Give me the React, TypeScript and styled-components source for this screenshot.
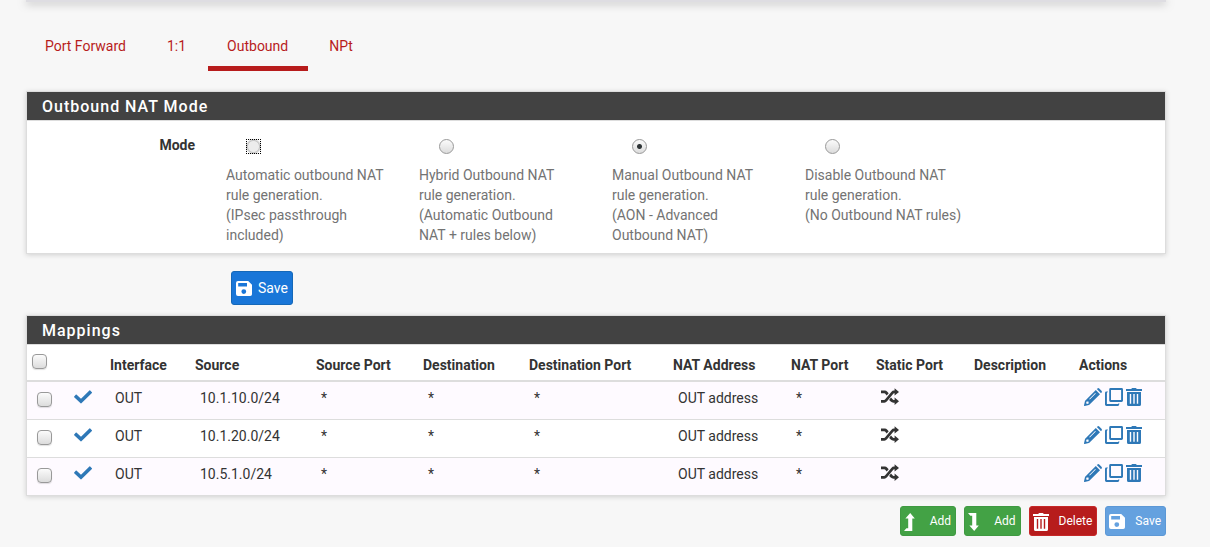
import React from 'react';
import styled, { createGlobalStyle, css } from 'styled-components';

const GlobalStyle = createGlobalStyle`
  *, *::before, *::after { box-sizing: border-box; }
  html { min-height: 100%; background: #f7f7f7; }
  body {
    margin: 0;
    background: #f7f7f7;
    color: #333;
    font: 14px/20px Roboto, "Liberation Sans", sans-serif;
  }
`;

const Page = styled.main`
  padding: 0 44px 10px 26px;
`;

const TopBar = styled.div`
  height: 2px;
  background: #dedde2;
  box-shadow: 0 1px 8px rgba(0, 0, 0, 0.5);
`;

const Tabs = styled.nav`
  display: flex;
  gap: 2px;
  margin: 24px 0 20px;
`;

const Tab = styled.a<{ $active?: boolean }>`
  padding: 10px 20px 10px 19px;
  border-bottom: 5px solid ${(p) => (p.$active ? '#b71c1c' : 'transparent')};
  color: #b71c1c;
  text-decoration: none;
`;

const Panel = styled.section`
  background: #fff;
  border: 1px solid #ddd;
  box-shadow: 0 1px 5px rgba(0, 0, 0, 0.16);
`;

const PanelTitle = styled.h2`
  margin: 0;
  height: 29px;
  padding: 0 15px;
  background: #424242;
  border-bottom: 1px solid #ddd;
  color: #fff;
  font-size: 16px;
  font-weight: 500;
  line-height: 30px;
  letter-spacing: 1px;
`;

const ModeRow = styled.fieldset`
  display: flex;
  margin: 0;
  border: 0;
  padding: 14px 0 8px;
`;

const ModeLabel = styled.span`
  width: 168px;
  margin-right: 31px;
  text-align: right;
  font-weight: 700;
`;

const ModeOptions = styled.div`
  display: flex;
`;

const ModeOption = styled.label`
  width: 193px;
  padding-right: 33px;
  color: #737373;
`;

const OptionText = styled.span`
  display: block;
  margin-top: 11px;
`;

const control = css`
  appearance: none;
  display: block;
  width: 15px;
  height: 15px;
  margin: 0;
  border: 1px solid #999;
  background: linear-gradient(#fbfbfb, #dcdcdc);
`;

const Radio = styled.input`
  ${control}
  margin: 4px 0 0 20px;
  border-radius: 50%;
  &:checked {
    background: radial-gradient(circle, #2e3436 0 2px, transparent 3px), linear-gradient(#fbfbfb, #dcdcdc);
  }
  &:focus {
    border: 1px dotted #000;
    border-radius: 0;
    outline: none;
    background: radial-gradient(circle, #ececec 0 5px, #c4c4c4 6px, #fff 8px);
  }
`;

const Checkbox = styled.input`
  ${control}
  border-radius: 4px;
  box-shadow: 0 1px 1px rgba(0, 0, 0, 0.12);
  &:checked { background: #2e78b7; }
`;

const SaveRow = styled.div`
  padding: 17px 0 10px 205px;
`;

const Button = styled.button<{ $color: string; $edge: string; $small?: boolean }>`
  display: flex;
  align-items: center;
  justify-content: space-between;
  gap: ${(p) => (p.$small ? 8 : 4)}px;
  height: ${(p) => (p.$small ? 30 : 34)}px;
  padding: ${(p) => (p.$small ? '0 4px 0 3px' : '0 4px')};
  border: 1px solid ${(p) => p.$edge};
  border-radius: 3px;
  background: ${(p) => p.$color};
  color: #fff;
  font-family: inherit;
  font-size: ${(p) => (p.$small ? 12 : 14)}px;
  line-height: 20px;
`;

const Footer = styled.div`
  display: flex;
  justify-content: flex-end;
  gap: 8px;
  margin-top: 10px;
`;

const MappingTable = styled.table`
  width: 100%;
  table-layout: fixed;
  border-collapse: separate;
  border-spacing: 0;
`;

const HeadCell = styled.th`
  height: 37px;
  padding: 10px 0 5px 5px;
  border-bottom: 2px solid #ddd;
  text-align: left;
  vertical-align: top;
  font-weight: 700;
  white-space: nowrap;
`;

const CheckHeadCell = styled(HeadCell)`
  padding-top: 9px;
`;

const Cell = styled.td`
  height: 38px;
  padding: 6px 0 0 10px;
  border-bottom: 1px solid #ddd;
  vertical-align: top;
  white-space: nowrap;
`;

const CheckCell = styled(Cell)`
  padding-top: 10px;
`;

const Row = styled.tr`
  &:nth-child(odd) { background: #fefaff; }
  &:last-child > td { height: 37px; border-bottom: 0; }
`;

const ActionList = styled.div`
  display: flex;
  gap: 3px;
  color: #2e78b7;
`;

const IconButton = styled.button`
  display: block;
  padding: 0;
  border: 0;
  background: none;
  color: inherit;
  line-height: 0;
`;

const Svg = styled.svg<{ $color?: string }>`
  display: block;
  flex: none;
  width: 18px;
  height: 18px;
  fill: ${(p) => p.$color ?? 'currentColor'};
  ${Button} & { margin-top: 1px; }
`;

const icons = {
  check: 'M2.4 6.5 7 10.8 15.4 2.5Q15.8 2.1 16.2 2.5L17.9 4.2Q18.2 4.6 17.9 5L7.4 15.3Q7 15.6 6.6 15.3L.2 9.2Q-.2 8.8 .2 8.4L1.7 6.7Q2 6.2 2.4 6.5Z',
  pencil:
    'M12.8 1 13.5.4Q14.4-.3 15.2.5L17.5 2.8Q18.3 3.6 17.6 4.5L17 5.2ZM11.8 2 16 6.2 5.6 16.6Q5.3 16.9 4.9 17L.7 18Q-.1 18.1 0 17.3L1 13.1Q1.1 12.7 1.4 12.4ZM2.6 13.4 2.1 15.1 2.9 15.9 4.7 15.4 4.5 13.6ZM11.2 5 5.2 11 5.8 11.6 11.8 5.6Z',
  clone:
    'M5.6 0H16.6Q18 0 18 1.4V12.6Q18 14 16.6 14H5.6Q4.2 14 4.2 12.6V1.4Q4.2 0 5.6 0ZM6 1.9V12.1H16.1V1.9ZM1.4 3.6H3V2.9 3.6L1.9 5V16.1H13L14.2 15V16.6Q14.2 18 12.8 18H1.4Q0 18 0 16.6V5Q0 3.6 1.4 3.6Z',
  trash:
    'M5.4 1Q5.4 0 6.4 0H9.6Q10.6 0 10.6 1H16V3H0V1ZM1 4H15V16.4Q15 18 13.4 18H2.6Q1 18 1 16.4ZM3.8 6V15.8H5.2V6ZM7.3 6V15.8H8.7V6ZM10.8 6V15.8H12.2V6Z',
  shuffle:
    'M0 2.5H3.9Q5.2 2.5 6.3 3.7L7.7 5.2 5.7 7.4 4 5.6Q3.7 5.3 3.2 5.3H0ZM0 11.9H3.2Q3.7 11.9 4 11.5L10.3 3.9Q11.5 2.5 13 2.5H13.6V.3L18 4 13.6 7.6V5.3H13Q12.6 5.3 12.3 5.7L6 13.3Q4.9 14.7 3.4 14.7H0ZM8.1 12 10 9.6 11.8 11.5Q12.1 11.9 12.6 11.9H13.6V9.6L18 13.2 13.6 16.9V14.7H12.5Q10.8 14.7 9.7 13.6Z',
  save:
    'M2 1H12.2L16 4.8V14.2Q16 16 14.2 16H2Q0 16 0 14V3Q0 1 2 1ZM2.2 3V6.6H11V3ZM7.8 9.2A2.4 2.4 0 1 0 7.8 14 2.4 2.4 0 1 0 7.8 9.2Z',
  up: 'M6.2 0 10.8 5.4H8.3V18H0L2.4 15.2H4.2V5.4H1.4Z',
  down: 'M6.2 18 10.8 12.6H8.3V0H0L2.4 2.8H4.2V12.6H1.4Z',
};

function Icon({ name, color }: { name: keyof typeof icons; color?: string }) {
  return (
    <Svg viewBox="0 0 18 18" $color={color} aria-hidden="true">
      <path fillRule="evenodd" d={icons[name]} />
    </Svg>
  );
}

const tabs = ['Port Forward', '1:1', 'Outbound', 'NPt'];

const modes = [
  ['Automatic outbound NAT rule generation.', '(IPsec passthrough included)'],
  ['Hybrid Outbound NAT rule generation.', '(Automatic Outbound NAT + rules below)'],
  ['Manual Outbound NAT rule generation.', '(AON - Advanced Outbound NAT)'],
  ['Disable Outbound NAT rule generation.', '(No Outbound NAT rules)'],
];

const Col = styled.col<{ $w: number }>`
  width: ${(p) => p.$w}px;
`;

const widths = [37, 41, 85, 121, 107, 106, 144, 118, 85, 98, 105, 91];
const headings = [
  'Interface', 'Source', 'Source Port', 'Destination', 'Destination Port',
  'NAT Address', 'NAT Port', 'Static Port', 'Description', 'Actions',
];
const sources = ['10.1.10.0/24', '10.1.20.0/24', '10.5.1.0/24'];

export default function App() {
  return (
    <>
      <GlobalStyle />
      <Page>
        <TopBar />
        <Tabs>
          {tabs.map((t) => (
            <Tab key={t} href="#" $active={t === 'Outbound'}>{t}</Tab>
          ))}
        </Tabs>

        <Panel>
          <PanelTitle>Outbound NAT Mode</PanelTitle>
          <ModeRow aria-labelledby="mode">
            <ModeLabel id="mode">Mode</ModeLabel>
            <ModeOptions>
              {modes.map(([text, note], i) => (
                <ModeOption key={text}>
                  <Radio type="radio" name="mode" defaultChecked={i === 2} autoFocus={i === 0} />
                  <OptionText>{text}<br />{note}</OptionText>
                </ModeOption>
              ))}
            </ModeOptions>
          </ModeRow>
        </Panel>

        <SaveRow>
          <Button $color="#1976d8" $edge="#1568b8"><Icon name="save" />Save</Button>
        </SaveRow>

        <Panel>
          <PanelTitle>Mappings</PanelTitle>
          <MappingTable>
            <colgroup>{widths.map((w, i) => <Col key={i} $w={w} />)}</colgroup>
            <thead>
              <tr>
                <CheckHeadCell><Checkbox type="checkbox" aria-label="Select all" /></CheckHeadCell>
                <HeadCell />
                {headings.map((h) => <HeadCell key={h}>{h}</HeadCell>)}
              </tr>
            </thead>
            <tbody>
              {sources.map((s) => (
                <Row key={s}>
                  <CheckCell><Checkbox type="checkbox" aria-label={`Select ${s}`} /></CheckCell>
                  <Cell><Icon name="check" color="#2e78b7" /></Cell>
                  <Cell>OUT</Cell>
                  <Cell>{s}</Cell>
                  <Cell>*</Cell>
                  <Cell>*</Cell>
                  <Cell>*</Cell>
                  <Cell>OUT address</Cell>
                  <Cell>*</Cell>
                  <Cell><Icon name="shuffle" /></Cell>
                  <Cell />
                  <Cell>
                    <ActionList>
                      <IconButton aria-label="Edit"><Icon name="pencil" /></IconButton>
                      <IconButton aria-label="Copy"><Icon name="clone" /></IconButton>
                      <IconButton aria-label="Delete"><Icon name="trash" /></IconButton>
                    </ActionList>
                  </Cell>
                </Row>
              ))}
            </tbody>
          </MappingTable>
        </Panel>

        <Footer>
          <Button $small $color="#43a245" $edge="#3f9a41"><Icon name="up" />Add</Button>
          <Button $small $color="#43a245" $edge="#3f9a41"><Icon name="down" />Add</Button>
          <Button $small $color="#b71c1c" $edge="#c62828"><Icon name="trash" />Delete</Button>
          <Button $small $color="#64a1df" $edge="#5c98d6"><Icon name="save" />Save</Button>
        </Footer>
      </Page>
    </>
  );
}
